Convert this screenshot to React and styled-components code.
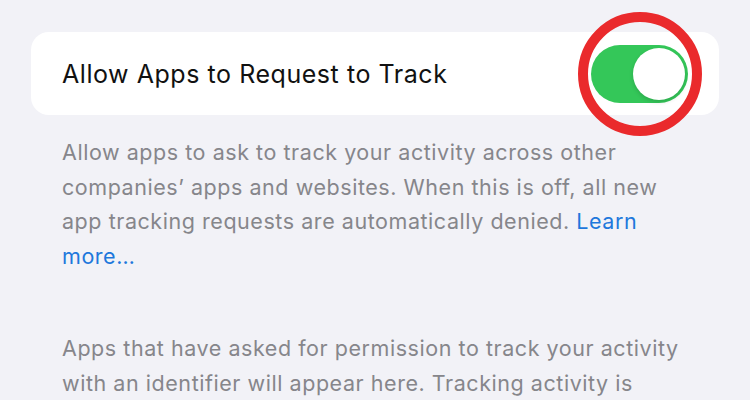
import React from "react";
import styled, { createGlobalStyle } from "styled-components";

const GlobalStyle = createGlobalStyle`
  body {
    margin: 0;
    background: #f2f2f7;
    font-family: Inter, "Noto Sans", sans-serif;
    -webkit-font-smoothing: antialiased;
  }
`;

const App = () => {
  return (
    <>
      <GlobalStyle />
      <Page>
        <Card>
          <Label>Allow Apps to Request to Track</Label>
          <ToggleWrap>
            <Toggle $on>
              <Knob />
            </Toggle>
            <Highlight />
          </ToggleWrap>
        </Card>
        <Footer>
          Allow apps to ask to track your activity across other
          <br />
          companies’ apps and websites. When this is off, all new
          <br />
          app tracking requests are automatically denied. <Link>Learn</Link>
          <br />
          <Link>more…</Link>
        </Footer>
        <Footer $gap>
          Apps that have asked for permission to track your activity
          <br />
          with an identifier will appear here. Tracking activity is
        </Footer>
      </Page>
    </>
  );
};

export default App;

const Page = styled.div`
  width: 750px;
  height: 400px;
  overflow: hidden;
  box-sizing: border-box;
  padding: 32px 31px 0;
`;

const Card = styled.div`
  height: 83px;
  background: #ffffff;
  border-radius: 18px;
  display: flex;
  align-items: center;
  justify-content: space-between;
  padding: 0 31px 0 31px;
`;

const Label = styled.span`
  font-size: 25px;
  color: #111111;
  letter-spacing: 0.55px;
`;

const ToggleWrap = styled.div`
  position: relative;
  display: flex;
  align-items: center;
`;

const Toggle = styled.div`
  width: 97px;
  height: 58px;
  border-radius: 29px;
  background: ${(p) => (p.$on ? "#34c759" : "#e9e9ea")};
  display: flex;
  align-items: center;
  justify-content: ${(p) => (p.$on ? "flex-end" : "flex-start")};
  padding: 0 3px;
  box-sizing: border-box;
`;

const Knob = styled.div`
  width: 52px;
  height: 52px;
  border-radius: 50%;
  background: #ffffff;
  box-shadow: 0 2px 4px rgba(0, 0, 0, 0.15);
`;

const Highlight = styled.div`
  position: absolute;
  left: -13px;
  top: -33px;
  width: 104px;
  height: 104px;
  border: 10px solid #ea2a2c;
  border-radius: 50%;
  pointer-events: none;
`;

const Footer = styled.p`
  margin: ${(p) => (p.$gap ? "58px" : "20px")} 0 0;
  padding: 0 31px;
  font-size: 21.5px;
  line-height: 34.5px;
  letter-spacing: 0.55px;
  color: #86868b;
`;

const Link = styled.span`
  color: #1e78dc;
`;
